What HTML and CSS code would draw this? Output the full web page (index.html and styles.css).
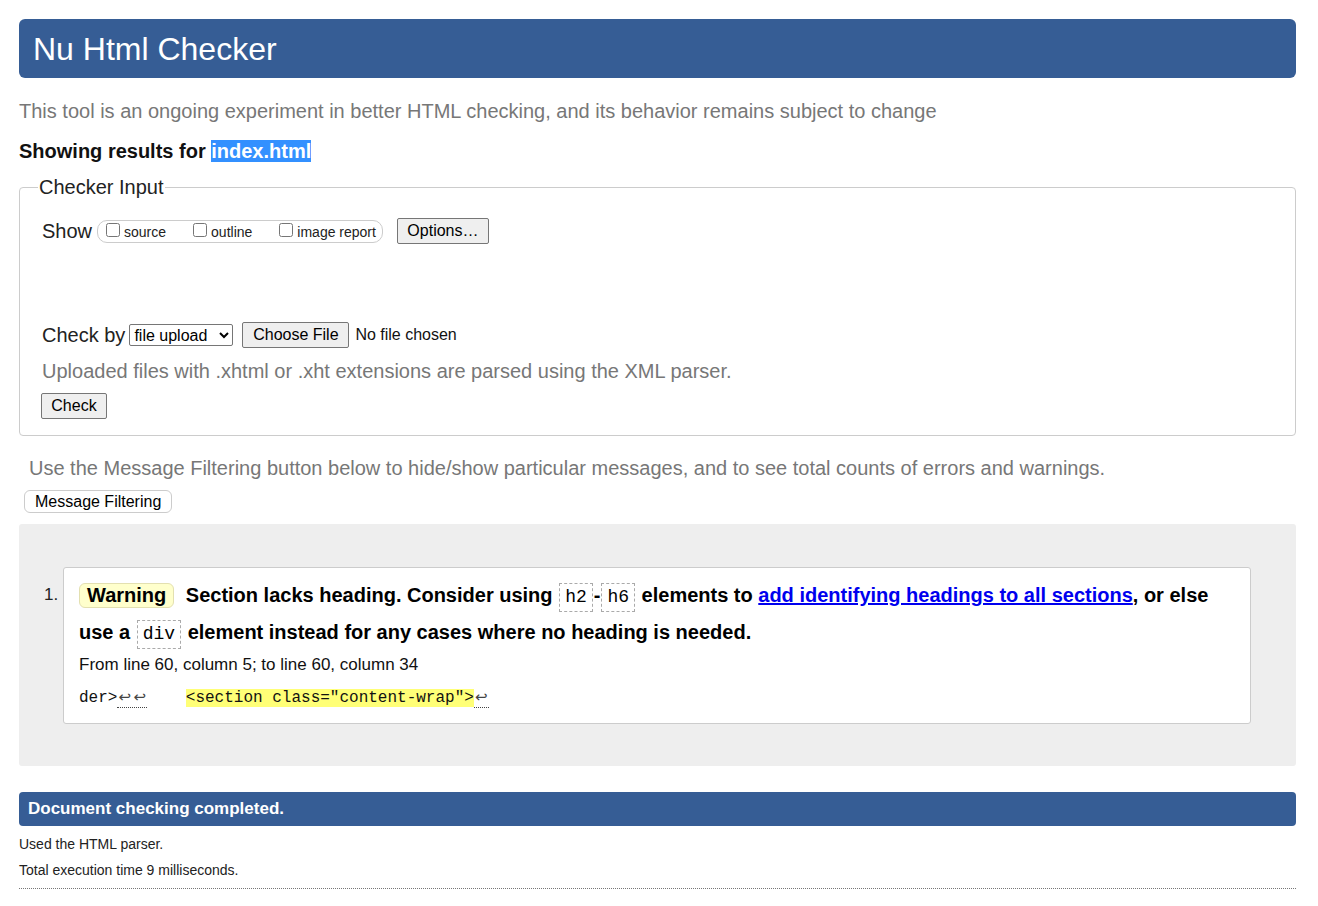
FILE: index.html
```html
<!DOCTYPE html>
<html lang="en">
<head>
<meta charset="utf-8">
<title>Nu Html Checker</title>
<link rel="stylesheet" href="styles.css">
</head>
<body>
<h1 class="banner">Nu Html Checker</h1>
<p class="intro">This tool is an ongoing experiment in better HTML checking, and its behavior remains subject to change</p>
<p class="showing">Showing results for <span class="sel">index.html</span></p>
<fieldset class="checker">
  <legend>Checker Input</legend>
  <div class="row show-row">
    <span class="lbl">Show</span>
    <span class="opts">
      <label class="opt"><input type="checkbox">source</label>
      <label class="opt"><input type="checkbox">outline</label>
      <label class="opt"><input type="checkbox">image report</label>
    </span>
    <button class="btn options">Options…</button>
  </div>
  <div class="row checkby-row">
    <span class="lbl">Check by</span>
    <select class="sel-box"><option>file upload</option></select>
    <button class="btn choose">Choose File</button>
    <span class="nofile">No file chosen</span>
  </div>
  <p class="note">Uploaded files with .xhtml or .xht extensions are parsed using the XML parser.</p>
  <button class="btn check">Check</button>
</fieldset>
<p class="filter-note">Use the Message Filtering button below to hide/show particular messages, and to see total counts of errors and warnings.</p>
<button class="filter-btn">Message Filtering</button>
<div class="results">
  <ol class="msgs">
    <li class="msg">
      <p class="msg-text"><span class="badge">Warning</span> Section lacks heading. Consider using <code class="el">h2</code>-<code class="el">h6</code> elements to <a href="#">add identifying headings to all sections</a>, or else use a <code class="el">div</code> element instead for any cases where no heading is needed.</p>
      <p class="loc">From line 60, column 5; to line 60, column 34</p>
      <p class="extract"><code>der&gt;<span class="lf"><span class="lfc">↩</span><span class="lfc">↩</span></span>    <b class="hl">&lt;section class="content-wrap"&gt;</b><span class="lf"><span class="lfc">↩</span></span></code></p>
    </li>
  </ol>
</div>
<p class="done">Document checking completed.</p>
<p class="stat">Used the HTML parser.</p>
<p class="stat">Total execution time 9 milliseconds.</p>
<hr class="dots">
</body>
</html>
```

FILE: styles.css
```css
* { box-sizing: border-box; }
html, body { margin: 0; }
body {
  padding: 19px 22px 0 19px;
  font-family: "Liberation Sans", Arial, sans-serif;
  color: #000;
  background: #fff;
}
.banner {
  margin: 0;
  height: 59px;
  line-height: 60px;
  padding: 0 14px;
  background: #365d95;
  color: #fff;
  font-size: 32px;
  font-weight: normal;
  border-radius: 6px;
}
.intro {
  margin: 21px 0 0;
  line-height: 24px;
  font-size: 20px;
  color: #777;
}
.showing {
  margin: 16px 0 0;
  line-height: 24px;
  font-size: 20px;
  font-weight: bold;
  color: #111;
}
.sel {
  background: #3390ff;
  color: #fff;
}
.checker {
  margin: 12px 0 0;
  padding: 0 22px 16px 22px;
  border: 1px solid #ccc;
  border-radius: 4px;
  min-width: 0;
}
.checker legend {
  padding: 0 1px;
  margin-left: -4px;
  font-size: 20px;
  line-height: 24px;
  color: #222;
}
.row {
  display: flex;
  align-items: center;
}
.show-row { margin-top: 18px; height: 28px; }
.lbl { font-size: 20px; color: #222; margin-right: 5px; }
.opts {
  display: flex;
  align-items: center;
  height: 23px;
  border: 1px solid #ccc;
  border-radius: 10px;
  padding: 0 6px 0 4px;
  margin-right: 14px;
}
.opt {
  display: flex;
  align-items: center;
  font-size: 14px;
  margin-right: 23px;
  color: #222;
  padding-top: 2px;
}
.opt:last-child { margin-right: 0; }
.opt input { margin: 0 4px 5px 4px; width: 14px; height: 14px; }
.btn {
  font-family: "Liberation Sans", Arial, sans-serif;
  font-size: 16px;
  background: #efefef;
  border: 1px solid #767676;
  border-radius: 2px;
  color: #000;
  padding: 0 8px;
  height: 26px;
}
.options { width: 92px; }
.checkby-row { margin-top: 76px; height: 28px; }
.sel-box {
  font-family: "Liberation Sans", Arial, sans-serif;
  font-size: 16px;
  height: 22px;
  width: 104px;
  border: 1px solid #767676;
  border-radius: 2px;
  background: #fff;
  margin-left: -1px;
  margin-right: 9px;
}
.choose { width: 107px; padding: 0 6px; }
.nofile { font-size: 16px; margin-left: 6px; color: #111; }
.note {
  margin: 10px 0 0;
  font-size: 20px;
  line-height: 24px;
  color: #777;
}
.check { margin: 10px 0 0 -1px; width: 66px; display: block; }
.filter-note {
  margin: 20px 0 0 10px;
  font-size: 20px;
  line-height: 24px;
  color: #777;
}
.filter-btn {
  display: block;
  margin: 10px 0 0 5px;
  height: 23px;
  padding: 0 10px;
  font-family: "Liberation Sans", Arial, sans-serif;
  font-size: 16px;
  background: #fff;
  border: 1px solid #ccc;
  border-radius: 6px;
  color: #000;
}
.results {
  margin-top: 11px;
  background: #eee;
  border-radius: 3px;
  padding: 43px 45px 42px 44px;
}
.msgs {
  margin: 0;
  padding: 0;
  list-style: none;
  counter-reset: m;
}
.msg {
  counter-increment: m;
  display: flow-root;
  background: #fff;
  border: 1px solid #ccc;
  border-radius: 3px;
  padding: 9px 16px 14px 15px;
  position: relative;
}
.msg::before {
  content: counter(m) ".";
  position: absolute;
  left: -20px;
  top: 17px;
  font-size: 17px;
  color: #222;
}
.msg-text {
  margin: 0;
  font-size: 20px;
  font-weight: bold;
  line-height: 37px;
  color: #000;
}
.badge {
  display: inline-block;
  background: #ffffcc;
  border: 1px solid #e3e0b0;
  border-radius: 6px;
  padding: 0 7px;
  line-height: 23px;
  margin-right: 6px;
}
.el {
  display: inline-block;
  font-family: "Liberation Mono", "DejaVu Sans Mono", monospace;
  font-weight: normal;
  font-size: 18px;
  line-height: 27px;
  border: 1px dashed #aaa;
  padding: 0 5px;
  margin: 0 1px;
}
.msg-text a { color: #0000ee; text-decoration: underline; }
.loc {
  margin: 3px 0 0;
  font-size: 17px;
  line-height: 22px;
  color: #111;
}
.extract {
  margin: 10px 0 0;
  line-height: 22px;
}
.extract code {
  font-family: "Liberation Mono", "DejaVu Sans Mono", monospace;
  font-size: 16px;
  white-space: pre;
  color: #111;
}
.lf {
  border-bottom: 1px dotted #444;
}
.lfc {
  display: inline-block;
  width: 15px;
  text-align: center;
  font-family: "DejaVu Sans", sans-serif;
  font-size: 15px;
  color: #444;
}
.hl { font-weight: normal; background: #ffff77; color: #111; }
.done {
  margin: 26px 0 0;
  height: 34px;
  line-height: 34px;
  padding-left: 9px;
  background: #365d95;
  color: #fff;
  font-weight: bold;
  font-size: 17px;
  border-radius: 4px;
}
.stat {
  margin: 0;
  font-size: 14px;
  line-height: 26px;
  color: #222;
}
.done + .stat { margin-top: 5px; }
.dots {
  margin: 5px 0 0;
  border: 0;
  border-top: 1px dotted #777;
}
```
